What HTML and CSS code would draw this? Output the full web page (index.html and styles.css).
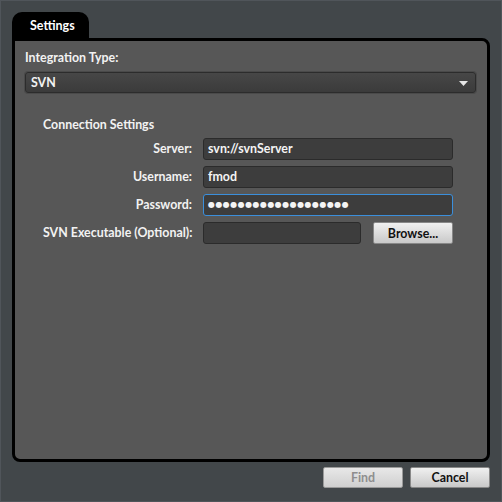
FILE: index.html
```html
<!DOCTYPE html>
<html>
<head>
<meta charset="utf-8">
<link rel="stylesheet" href="styles.css">
</head>
<body>
<div class="window">
  <div class="tabbar"><div class="tab">Settings</div></div>
  <div class="panel">
    <div class="field-label">Integration Type:</div>
    <div class="combo"><span>SVN</span><svg class="arrow" width="9" height="5" viewBox="0 0 9 5"><path d="M0 0H9L4.5 5Z" fill="#e6e6e6"/></svg></div>
    <div class="group">
      <div class="group-title">Connection Settings</div>
      <div class="form">
        <label>Server:</label>
        <div class="input">svn://svnServer</div>
        <label>Username:</label>
        <div class="input">fmod</div>
        <label>Password:</label>
        <div class="input focus"><span class="dots">●●●●●●●●●●●●●●●●●●●</span><span class="caret"></span></div>
        <label>SVN Executable (Optional):</label>
        <div class="browse-row"><div class="input short"></div><button class="btn">Browse...</button></div>
      </div>
    </div>
  </div>
  <div class="footer">
    <button class="btn disabled">Find</button>
    <button class="btn">Cancel</button>
  </div>
</div>
</body>
</html>
```
FILE: styles.css
```css
* { box-sizing: border-box; }
html, body { margin: 0; padding: 0; }
body {
  width: 502px; height: 502px;
  background: #42474a;
  font-family: "Lato", "Liberation Sans", sans-serif;
  font-weight: bold;
  font-size: 12.4px;
  color: #f2f2f2;
  overflow: hidden;
}
.window {
  width: 502px; height: 502px;
  border: 1px solid #50555a;
  padding: 11px 11px 0 11px;
  display: flex; flex-direction: column;
}
.tabbar { display: flex; height: 26px; }
.tab {
  width: 77px; height: 28px;
  background: #000;
  border-radius: 10px 10px 0 0;
  padding: 6px 0 0 18px;
  font-size: 12.5px;
  color: #fff;
}
.panel {
  height: 424px;
  background: #575757;
  border: 3px solid #000;
  border-radius: 0 8px 8px 8px;
  padding: 9px 11px 0 10px;
}
.field-label { height: 16px; line-height: 16px; }
.combo {
  margin-top: 6px;
  height: 21px;
  border: 1px solid #2c2c2c;
  box-shadow: 0 0 0 1px #4a4a4a;
  border-radius: 3px;
  background: linear-gradient(#474747, #3b3b3b);
  display: flex; align-items: center; justify-content: space-between;
  padding: 0 7px 0 5px;
}
.arrow { margin-top: 1px; }
.group { padding: 24px 0 0 18px; }
.group-title { height: 16px; line-height: 16px; }
.form {
  margin-top: 5px;
  display: grid;
  grid-template-columns: 149px 250px;
  column-gap: 11px;
  row-gap: 6px;
}
label { text-align: right; line-height: 22px; height: 22px; white-space: nowrap; }
.input {
  height: 22px;
  background: #3d3d3d;
  border: 1px solid #2b2b2b;
  border-radius: 3px;
  padding: 0 4px;
  line-height: 20px;
  color: #f4f4f4;
  display: flex; align-items: center;
}
.input.focus { border-color: #3b8fdc; }
.dots { font-family: "DejaVu Sans", sans-serif; font-size: 8px; letter-spacing: 0.45px; }
.caret { width: 1px; height: 14px; background: transparent; }
.input.short { width: 158px; }
.browse-row { display: flex; justify-content: space-between; }
.btn {
  height: 22px; width: 80px;
  font-family: inherit; font-weight: bold; font-size: 12.4px;
  color: #111;
  background: linear-gradient(#f0f0f0, #c9c9c9);
  border: 1px solid #888;
  border-radius: 2px;
  padding: 0;
}
.footer {
  display: flex; justify-content: flex-end; gap: 7px;
  padding-top: 5px; padding-right: 0;
}
.footer .btn { height: 21px; width: 80px; }
.btn.disabled { color: #8e8e8e; background: linear-gradient(#e8e8e8, #cfcfcf); border-color: #9a9a9a; }
```
